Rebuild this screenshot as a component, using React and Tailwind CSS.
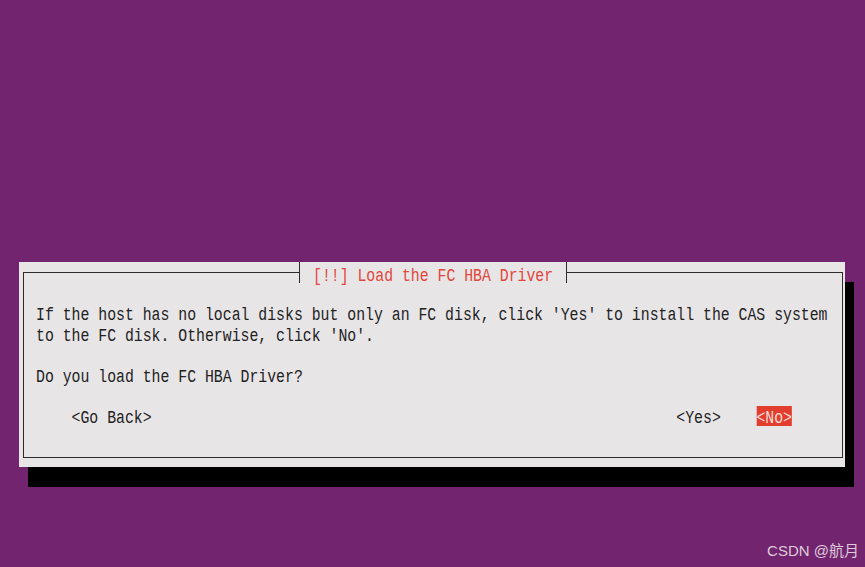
export default function App() {
  const row =
    "h-[20.5px] pt-[5px] leading-[15px] whitespace-pre origin-left scale-x-[0.78]";
  return (
    <div className="w-[865px] h-[567px] bg-[#73246e] flex flex-col overflow-hidden font-['Liberation_Mono',monospace] text-[19px] text-[#222]">
      <div className="relative ml-[19px] mt-[262px] w-[826px] h-[205px] shrink-0 bg-[#e8e5e7] shadow-[9px_20px_0_0_#000] pt-[10px] pl-[4px]">
        <div className="w-[820px] h-[186px] border border-[#2b2b2b] pt-[30px] pl-[12px] flex flex-col">
          <div className={row}>
            If the host has no local disks but only an FC disk, click 'Yes' to install the CAS system
          </div>
          <div className={row}>to the FC disk. Otherwise, click 'No'.</div>
          <div className={row}> </div>
          <div className={row}>Do you load the FC HBA Driver?</div>
          <div className={row}> </div>
          <div className="h-[20.5px] flex items-stretch whitespace-pre origin-left scale-x-[0.78]">
            <span className="pt-[5px] leading-[15px]">
              {"    <Go Back>" + " ".repeat(59) + "<Yes>    "}
            </span>
            <span className="pt-[5px] leading-[15px] bg-[#e23d2d] text-[#f6dcd8]">
              {"<No>"}
            </span>
          </div>
        </div>
        <div className="absolute top-0 left-[280px] w-[268px] h-[20.5px] bg-[#e8e5e7] border-x border-[#2b2b2b] pl-[13px]">
          <span className="inline-block whitespace-pre origin-left scale-x-[0.78] pt-[4px] leading-[15px] text-[#e0473b]">
            [!!] Load the FC HBA Driver
          </span>
        </div>
      </div>
      <div className="mt-auto flex justify-end pr-[6px] pb-[8px] font-['Liberation_Sans','Noto_Sans_CJK_SC',sans-serif] text-[15px] leading-[17px] text-[#dccbdb]">
        CSDN @航月
      </div>
    </div>
  );
}
